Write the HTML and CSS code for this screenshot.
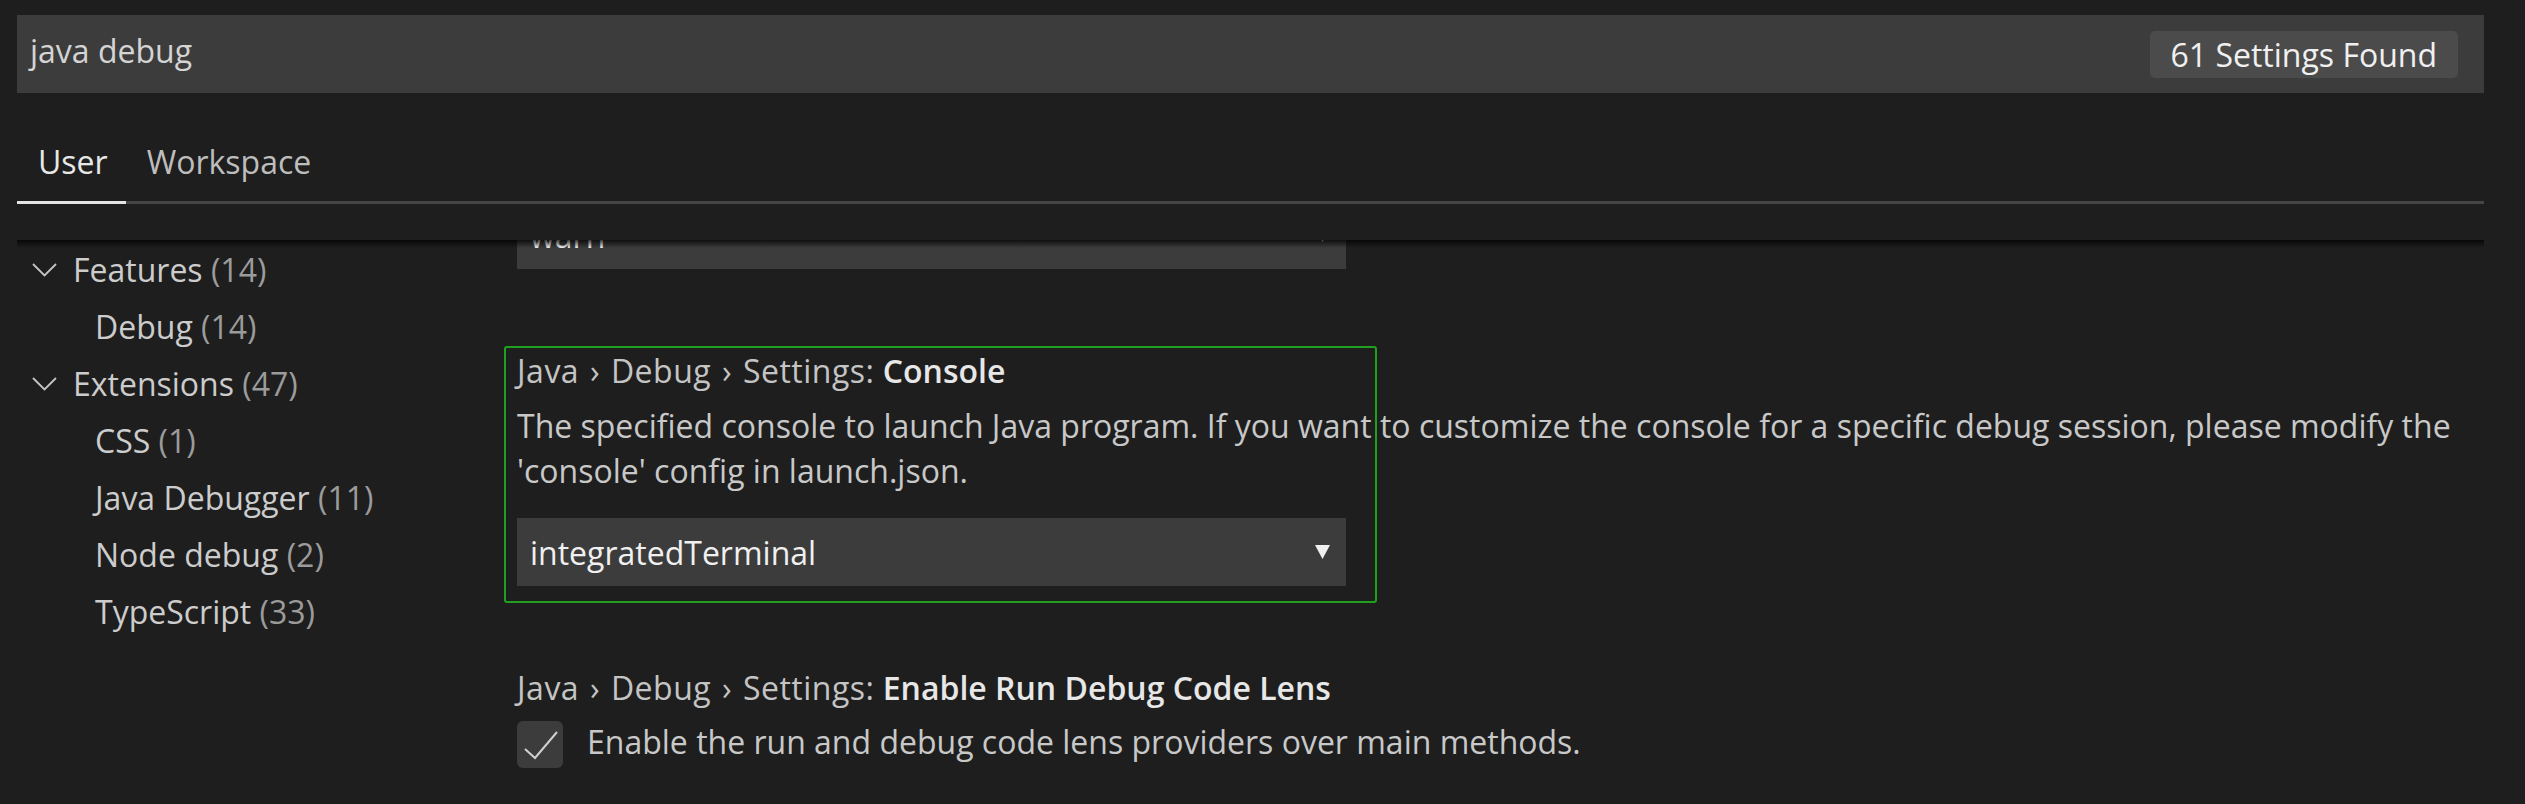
FILE: index.html
```html
<!DOCTYPE html>
<html lang="en">
<head>
<meta charset="utf-8">
<title>Settings</title>
<link rel="stylesheet" href="styles.css">
</head>
<body>
<div class="page">
  <div class="search">
    <div class="search-input">java debug</div>
    <div class="badge">61 Settings Found</div>
  </div>
  <div class="tabs">
    <div class="tab active">User</div>
    <div class="tab">Workspace</div>
  </div>
  <div class="body">
    <div class="tree">
      <div class="row parent">
        <svg class="chev" width="25" height="14" viewBox="0 0 25 14"><polyline points="1,1 12.5,12.5 24,1" fill="none" stroke="#c5c5c5" stroke-width="1.8"/></svg>
        <span class="text"><span class="label">Features</span> <span class="count">(14)</span></span>
      </div>
      <div class="row child"><span class="text"><span class="label">Debug</span> <span class="count">(14)</span></span></div>
      <div class="row parent">
        <svg class="chev" width="25" height="14" viewBox="0 0 25 14"><polyline points="1,1 12.5,12.5 24,1" fill="none" stroke="#c5c5c5" stroke-width="1.8"/></svg>
        <span class="text"><span class="label">Extensions</span> <span class="count">(47)</span></span>
      </div>
      <div class="row child"><span class="text"><span class="label">CSS</span> <span class="count">(1)</span></span></div>
      <div class="row child"><span class="text"><span class="label">Java Debugger</span> <span class="count">(11)</span></span></div>
      <div class="row child"><span class="text"><span class="label">Node debug</span> <span class="count">(2)</span></span></div>
      <div class="row child"><span class="text"><span class="label">TypeScript</span> <span class="count">(33)</span></span></div>
    </div>
    <div class="settings">
      <div class="settings-scroll">
        <div class="setting partial">
          <div class="select">
            <span>warn</span>
            <svg class="arrow" width="15" height="14" viewBox="0 0 15 14"><polygon points="0,0 15,0 7.5,14" fill="#f0f0f0"/></svg>
          </div>
        </div>
        <div class="setting focused">
          <div class="focus-ring"></div>
          <div class="title"><span class="cat">Java › Debug › Settings:</span> <span class="key">Console</span></div>
          <div class="desc">The specified console to launch Java program. If you want to customize the console for a specific debug session, please modify the 'console' config in launch.json.</div>
          <div class="select">
            <span>integratedTerminal</span>
            <svg class="arrow" width="15" height="14" viewBox="0 0 15 14"><polygon points="0,0 15,0 7.5,14" fill="#f0f0f0"/></svg>
          </div>
        </div>
        <div class="setting">
          <div class="title"><span class="cat">Java › Debug › Settings:</span> <span class="key">Enable Run Debug Code Lens</span></div>
          <div class="check-row">
            <div class="checkbox">
              <svg width="46" height="47" viewBox="0 0 46 47"><polyline points="8,28 18,37 40,11" fill="none" stroke="#d0d0d0" stroke-width="2"/></svg>
            </div>
            <div class="check-label">Enable the run and debug code lens providers over main methods.</div>
          </div>
        </div>
      </div>
    </div>
  </div>
</div>
</body>
</html>
```
FILE: styles.css
```css
html, body {
  margin: 0;
  height: 100%;
  background: #1e1e1e;
  overflow: hidden;
}
body {
  font-family: "Open Sans", "Noto Sans", sans-serif;
  font-size: 32px;
  color: #cccccc;
}
.page {
  padding: 15px 41px 0 17px;
  height: 804px;
  box-sizing: border-box;
  display: flex;
  flex-direction: column;
}
.search {
  height: 78px;
  background: #3c3c3c;
  display: flex;
  align-items: flex-start;
  justify-content: space-between;
  flex: none;
}
.search-input {
  padding: 13px 0 0 13px;
  line-height: 45px;
  color: #d4d4d4;
}
.badge {
  margin: 16px 26px 0 0;
  height: 47px;
  line-height: 47px;
  padding: 0 21px;
  background: #4b4b4b;
  border-radius: 5px;
  color: #f0f0f0;
}
.tabs {
  display: flex;
  padding-top: 46px;
  border-bottom: 3px solid #454545;
  margin-bottom: 36px;
  flex: none;
}
.tab {
  line-height: 45px;
  padding: 0 19px 17px 21px;
  margin-bottom: -3px;
  border-bottom: 3px solid transparent;
  color: #bdbdbd;
}
.tab.active {
  color: #e7e7e7;
  border-bottom-color: #e4e4e4;
  padding-right: 18px;
}
.body {
  flex: 1;
  display: flex;
  position: relative;
  overflow: hidden;
}
.body::before {
  content: "";
  position: absolute;
  left: 0;
  right: 0;
  top: 0;
  height: 8px;
  background: linear-gradient(rgba(0, 0, 0, 0.75), rgba(0, 0, 0, 0));
  z-index: 2;
}
.tree {
  width: 480px;
  flex: none;
  padding-top: 1px;
}
.row {
  height: 57px;
  line-height: 57px;
  display: flex;
  align-items: center;
  white-space: nowrap;
}
.row.parent {
  padding-left: 15px;
}
.row.child {
  padding-left: 78px;
}
.chev {
  margin-right: 16px;
  flex: none;
}
.label {
  color: #cccccc;
}
.count {
  color: #9b9b9b;
}
.settings {
  flex: 1;
  overflow: hidden;
  padding-left: 20px;
}
.settings-scroll {
  margin-top: -39px;
}
.setting {
  position: relative;
}
.setting + .setting {
  margin-top: 79px;
}
.setting.partial .select {
  margin-top: 0;
}
.title {
  line-height: 45px;
  white-space: nowrap;
}
.cat {
  color: #c4c4c4;
  letter-spacing: 0.5px;
  word-spacing: 2px;
}
.key {
  color: #e7e7e7;
  font-weight: 600;
}
.desc {
  margin-top: 10px;
  line-height: 45px;
  color: #c8c8c8;
}
.select {
  margin-top: 25px;
  width: 829px;
  height: 68px;
  background: #3c3c3c;
  box-sizing: border-box;
  padding: 0 16px 0 13px;
  display: flex;
  align-items: center;
  justify-content: space-between;
  color: #f0f0f0;
}
.focus-ring {
  position: absolute;
  left: -13px;
  top: -2px;
  width: 873px;
  height: 257px;
  border: 2px solid #1fa11f;
  border-radius: 3px;
  box-sizing: border-box;
  pointer-events: none;
}
.check-row {
  margin-top: 9px;
  display: flex;
  align-items: flex-start;
}
.checkbox {
  width: 46px;
  height: 47px;
  margin-top: 2px;
  background: #3c3c3c;
  border-radius: 6px;
  flex: none;
}
.checkbox svg {
  display: block;
}
.check-label {
  margin-left: 24px;
  line-height: 45px;
  color: #c8c8c8;
}
```
